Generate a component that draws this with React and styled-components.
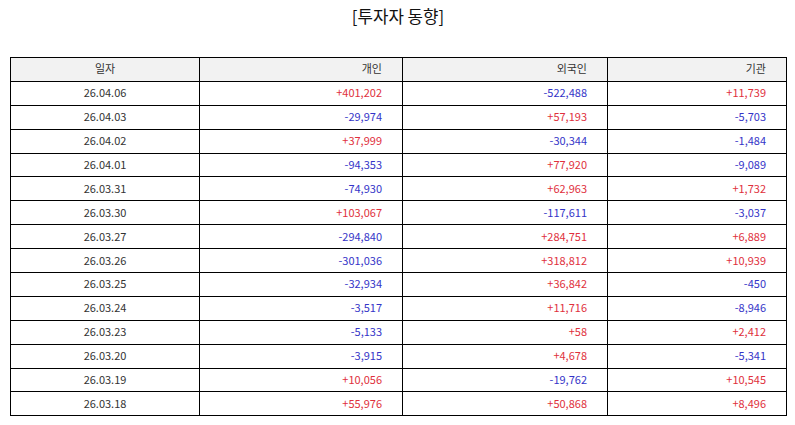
import React from "react";
import styled, { createGlobalStyle } from "styled-components";

const Global = createGlobalStyle`
  html, body { margin: 0; padding: 0; background: #fff; }
  body { font-family: "Noto Sans CJK KR", "Noto Sans", sans-serif; }
`;

const Page = styled.div`
  width: 795px;
  height: 425px;
  padding: 0 9px 0 10px;
  box-sizing: border-box;
`;

const Title = styled.h1`
  margin: 0;
  height: 57px;
  padding-top: 4px;
  box-sizing: border-box;
  text-align: center;
  font-size: 16.8px;
  font-weight: 400;
  color: #111;
  line-height: 24px;
`;

const Table = styled.table`
  width: 776px;
  border-collapse: collapse;
  table-layout: fixed;
  font-size: 11px;
  color: #333;
`;

const Th = styled.th`
  height: 20.9px;
  padding: 0 ${(p) => (p.$center ? "0" : "20px")} 2px 0;
  border: 1px solid #000;
  background: #f2f2f2;
  font-weight: 400;
  text-align: ${(p) => (p.$center ? "center" : "right")};
`;

const Td = styled.td`
  height: 20.9px;
  padding: 0 ${(p) => (p.$center ? "0" : "20px")} 2px 0;
  border: 1px solid #000;
  text-align: ${(p) => (p.$center ? "center" : "right")};
  color: ${(p) => (p.$tone === "up" ? "#e0303c" : p.$tone === "down" ? "#3434c8" : "#333")};
`;

const rows = [
  ["26.04.06", "+401,202", "-522,488", "+11,739"],
  ["26.04.03", "-29,974", "+57,193", "-5,703"],
  ["26.04.02", "+37,999", "-30,344", "-1,484"],
  ["26.04.01", "-94,353", "+77,920", "-9,089"],
  ["26.03.31", "-74,930", "+62,963", "+1,732"],
  ["26.03.30", "+103,067", "-117,611", "-3,037"],
  ["26.03.27", "-294,840", "+284,751", "+6,889"],
  ["26.03.26", "-301,036", "+318,812", "+10,939"],
  ["26.03.25", "-32,934", "+36,842", "-450"],
  ["26.03.24", "-3,517", "+11,716", "-8,946"],
  ["26.03.23", "-5,133", "+58", "+2,412"],
  ["26.03.20", "-3,915", "+4,678", "-5,341"],
  ["26.03.19", "+10,056", "-19,762", "+10,545"],
  ["26.03.18", "+55,976", "+50,868", "+8,496"],
];

const tone = (v) => (v.startsWith("+") ? "up" : v.startsWith("-") ? "down" : "");

export default function App() {
  return (
    <Page>
      <Global />
      <Title>[투자자 동향]</Title>
      <Table>
        <colgroup>
          <col style={{ width: 189 }} />
          <col style={{ width: 203 }} />
          <col style={{ width: 205 }} />
          <col style={{ width: 179 }} />
        </colgroup>
        <thead>
          <tr>
            <Th $center>일자</Th>
            <Th>개인</Th>
            <Th>외국인</Th>
            <Th>기관</Th>
          </tr>
        </thead>
        <tbody>
          {rows.map((r) => (
            <tr key={r[0]}>
              <Td $center>{r[0]}</Td>
              <Td $tone={tone(r[1])}>{r[1]}</Td>
              <Td $tone={tone(r[2])}>{r[2]}</Td>
              <Td $tone={tone(r[3])}>{r[3]}</Td>
            </tr>
          ))}
        </tbody>
      </Table>
    </Page>
  );
}
